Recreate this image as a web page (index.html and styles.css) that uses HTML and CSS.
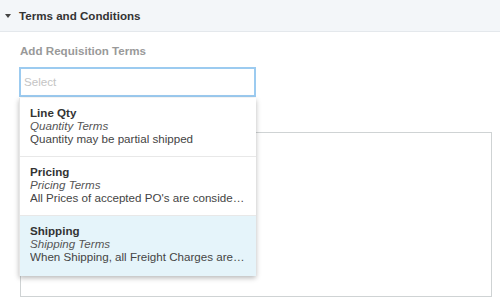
FILE: index.html
```html
<!DOCTYPE html>
<html lang="en">
<head>
    <meta charset="UTF-8">
    <meta name="viewport" content="width=device-width, initial-scale=1.0">
    <title>Terms and Conditions</title>
    <link rel="stylesheet" href="styles.css">
</head>
<body>
    <div class="panel">
        <div class="panel-header">
            <span class="caret"></span>
            <span class="panel-title">Terms and Conditions</span>
        </div>
        <div class="panel-body">
            <label class="field-label">Add Requisition Terms</label>
            <div class="picker">
                <div class="picker-input">Select</div>
                <ul class="picker-menu">
                    <li class="picker-item">
                        <div class="item-name">Line Qty</div>
                        <div class="item-type">Quantity Terms</div>
                        <div class="item-desc">Quantity may be partial shipped</div>
                    </li>
                    <li class="picker-item">
                        <div class="item-name">Pricing</div>
                        <div class="item-type">Pricing Terms</div>
                        <div class="item-desc">All Prices of accepted PO's are considered final and binding</div>
                    </li>
                    <li class="picker-item active">
                        <div class="item-name">Shipping</div>
                        <div class="item-type">Shipping Terms</div>
                        <div class="item-desc">When Shipping, all Freight Charges are to be prepaid by vendor</div>
                    </li>
                </ul>
            </div>
            <div class="terms-box"></div>
        </div>
    </div>
</body>
</html>
```

FILE: styles.css
```css
body {
    margin: 0;
    font-family: "Liberation Sans", Arial, sans-serif;
    font-size: 11.6px;
    color: #333;
    background: #fff;
}
.panel-header {
    height: 31px;
    display: flex;
    align-items: center;
    background-color: #f3f6f9;
    border-bottom: 1px solid #e4e8ec;
}
.caret {
    width: 0;
    height: 0;
    margin: 1px 8px 0 5px;
    border-left: 3.5px solid transparent;
    border-right: 3.5px solid transparent;
    border-top: 4px solid #444;
}
.panel-title {
    font-weight: bold;
    color: #333;
}
.panel-body {
    padding: 12px 8px 0 20px;
}
.field-label {
    display: block;
    font-weight: bold;
    color: #999;
    line-height: 14px;
}
.picker {
    position: relative;
    width: 237px;
    margin: 9px 0 0 -1px;
}
.picker-input {
    height: 26px;
    line-height: 26px;
    padding-left: 3px;
    border: 2px solid #9ccbf0;
    color: #c4c4c4;
}
.picker-menu {
    position: absolute;
    top: 31px;
    left: 0;
    right: 0;
    margin: 0;
    padding: 0;
    list-style: none;
    background: #fff;
    border-left: 1px solid #e6e6e6;
    box-shadow: 0 2px 5px rgba(0, 0, 0, 0.28);
    z-index: 2;
}
.picker-item {
    height: 59px;
    padding: 8px 10px 0 10px;
    box-sizing: border-box;
    border-bottom: 1px solid #e8e8e8;
    line-height: 13px;
}
.picker-item:last-child {
    border-bottom: none;
    height: 60px;
}
.picker-item.active {
    background-color: #e5f4fa;
}
.item-name {
    font-weight: bold;
    color: #333;
}
.item-type {
    font-style: italic;
    color: #555;
}
.item-desc {
    color: #444;
    white-space: nowrap;
    overflow: hidden;
    text-overflow: ellipsis;
}
.terms-box {
    margin-top: 35px;
    width: 470px;
    height: 163px;
    border: 1px solid #cfd3d4;
}
```
